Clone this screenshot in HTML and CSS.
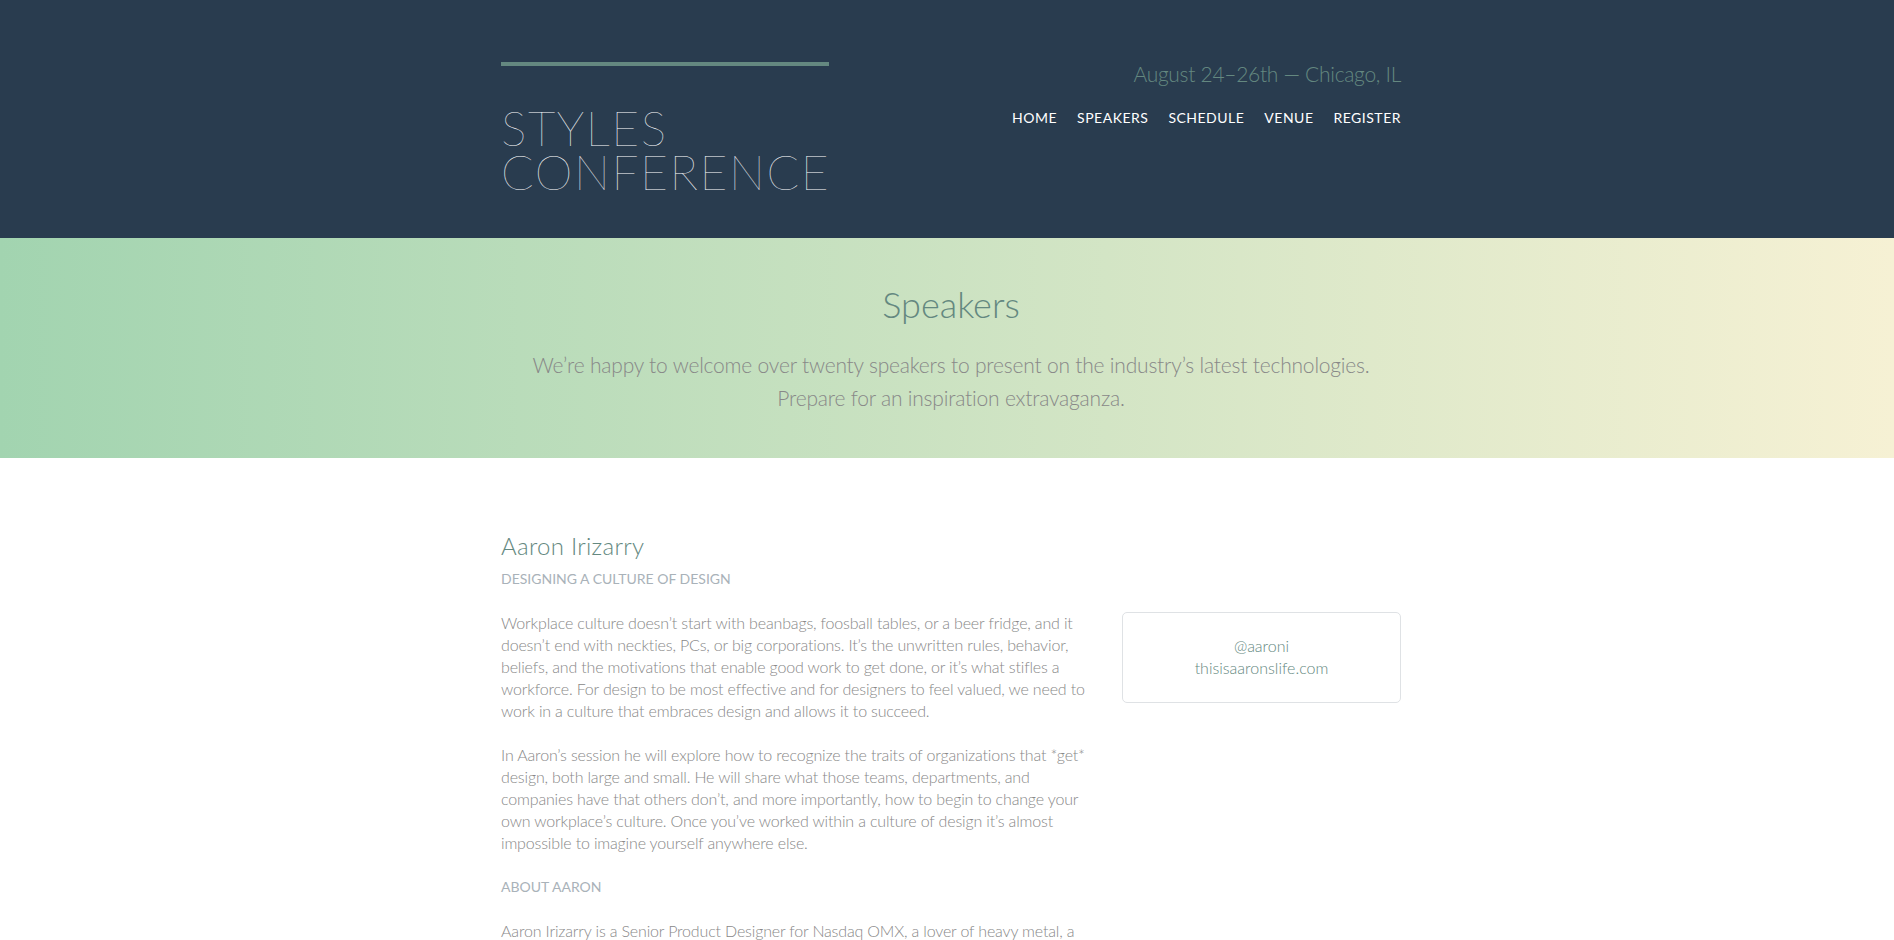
FILE: index.html
```html
<!DOCTYPE html>
<html lang="en">
<head>
<meta charset="utf-8">
<title>Speakers — Styles Conference</title>
<link rel="stylesheet" href="styles.css">
</head>
<body>
<header class="primary-header">
  <div class="container header-row">
    <h1 class="logo"><a href="#">Styles<br>Conference</a></h1>
    <div class="header-side">
      <h3 class="tagline">August 24&ndash;26th &mdash; Chicago, IL</h3>
      <nav class="primary-nav">
        <a href="#">Home</a>
        <a href="#">Speakers</a>
        <a href="#">Schedule</a>
        <a href="#">Venue</a>
        <a href="#">Register</a>
      </nav>
    </div>
  </div>
</header>

<section class="hero">
  <div class="container">
    <h1 class="hero-title">Speakers</h1>
    <p class="lead">We&rsquo;re happy to welcome over twenty speakers to present on the industry&rsquo;s latest technologies.<br>Prepare for an inspiration extravaganza.</p>
  </div>
</section>

<section class="speakers">
  <div class="container">
    <article class="speaker">
      <h2 class="speaker-name">Aaron Irizarry</h2>
      <h5 class="kicker">Designing a Culture of Design</h5>
      <div class="speaker-row">
        <div class="speaker-body">
          <p>Workplace culture doesn&rsquo;t start with beanbags, foosball tables, or a beer fridge, and it doesn&rsquo;t end with neckties, PCs, or big corporations. It&rsquo;s the unwritten rules, behavior, beliefs, and the motivations that enable good work to get done, or it&rsquo;s what stifles a workforce. For design to be most effective and for designers to feel valued, we need to work in a culture that embraces design and allows it to succeed.</p>
          <p>In Aaron&rsquo;s session he will explore how to recognize the traits of organizations that *get* design, both large and small. He will share what those teams, departments, and companies have that others don&rsquo;t, and more importantly, how to begin to change your own workplace&rsquo;s culture. Once you&rsquo;ve worked within a culture of design it&rsquo;s almost impossible to imagine yourself anywhere else.</p>
          <h5 class="kicker">About Aaron</h5>
          <p>Aaron Irizarry is a Senior Product Designer for Nasdaq OMX, a lover of heavy metal, a husband, a father, and a co-author of Discussing Design, a book about critique and collaboration.</p>
        </div>
        <aside class="speaker-info">
          <a href="#">@aaroni</a>
          <a href="#">thisisaaronslife.com</a>
        </aside>
      </div>
    </article>
  </div>
</section>
</body>
</html>
```

FILE: styles.css
```css
* { box-sizing: border-box; }

html, body { margin: 0; padding: 0; }

body {
  color: #888;
  font-family: "Lato", "Open Sans", "Liberation Sans", sans-serif;
  font-weight: 300;
  font-size: 16px;
  line-height: 22px;
  background: #fff;
}

h1, h2, h3, h4, h5, p { margin: 0; }

a { text-decoration: none; color: #648880; }

.container {
  width: 908px;
  padding-left: 8px;
  margin: 0 auto;
}

/* Header */
.primary-header {
  background: #293c4f;
  padding-top: 62px;
  padding-bottom: 22px;
}

.header-row {
  display: flex;
  justify-content: space-between;
  align-items: flex-start;
}

.logo {
  border-top: 4px solid #648880;
  padding: 40px 0 22px 0;
  font-size: 48px;
  font-weight: 100;
  letter-spacing: 1.55px;
  line-height: 44px;
  text-transform: uppercase;
  width: 328px;
  white-space: nowrap;
}

.logo a { color: #fff; }

.header-side {
  display: flex;
  flex-direction: column;
  align-items: flex-end;
  padding-top: 1px;
}

.tagline {
  color: #648880;
  font-size: 21px;
  font-weight: 300;
  letter-spacing: -0.3px;
  line-height: 22px;
  margin-bottom: 22px;
}

.primary-nav {
  display: flex;
  gap: 20px;
  font-size: 14px;
  font-weight: 400;
  letter-spacing: 0.5px;
  line-height: 22px;
  text-transform: uppercase;
}

.primary-nav a { color: #fff; }

/* Hero */
.hero {
  background: linear-gradient(to right, #a2d4b0 0%, #f6f1d4 100%);
  padding: 44px 0;
  text-align: center;
}

.hero-title {
  color: #648880;
  font-size: 36px;
  font-weight: 300;
  line-height: 44px;
  margin-bottom: 22px;
}

.lead {
  font-size: 21px;
  letter-spacing: -0.2px;
  line-height: 33px;
}

/* Speakers */
.speakers {
  padding-top: 66px;
}

.speaker-name {
  color: #648880;
  font-size: 24px;
  font-weight: 300;
  letter-spacing: 0.27px;
  line-height: 44px;
}

.kicker {
  color: #a9b2b9;
  font-size: 14px;
  font-weight: 400;
  line-height: 22px;
  text-transform: uppercase;
  margin-bottom: 22px;
}

.speaker-row {
  display: grid;
  grid-template-columns: 600px 279px;
  justify-content: space-between;
  align-items: start;
}

.speaker-body p {
  letter-spacing: -0.16px;
  margin-bottom: 22px;
}

.speaker-info {
  border: 1px solid #dfe2e5;
  border-radius: 5px;
  padding: 22px 0 23px;
  text-align: center;
  display: flex;
  flex-direction: column;
}
```
